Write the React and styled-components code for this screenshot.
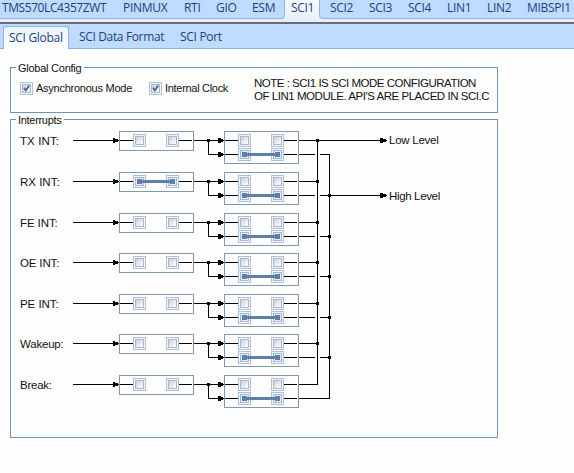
import React from "react";
import styled, { createGlobalStyle } from "styled-components";

const GlobalStyle = createGlobalStyle`
  * { box-sizing: border-box; }
  body { margin: 0; background: #fefeff; overflow: hidden; }
`;

const Page = styled.div`
  width: 574px;
  height: 473px;
  overflow: hidden;
  background: #fefeff;
  color: #111;
  font: 11.5px/14px "Liberation Sans", Arial, sans-serif;
`;

const ModuleBar = styled.nav`
  display: flex;
  height: 22px;
  background: #e5eef9;
`;

const SubBar = styled.nav`
  display: flex;
  align-items: flex-end;
  height: 27px;
  padding-left: 3px;
  border-top: 2px solid #6c6e74;
  border-bottom: 1px solid #8db4e3;
  background: #bfdbff;
`;

const tabText = `
  color: #1e3f80;
  font-family: "Open Sans", "Noto Sans", sans-serif;
  font-size: 12px;
  white-space: nowrap;
`;

const edges = {
  right: "border-right: 1px solid #8db4e3; border-bottom-right-radius: 4px;",
  left: "border-left: 1px solid #8db4e3; border-bottom-left-radius: 4px;",
};

const ModuleTab = styled.div`
  ${tabText}
  flex: none;
  width: ${(p) => p.$width}px;
  height: 19px;
  padding-left: ${(p) => p.$pad ?? 11}px;
  line-height: 16px;
  letter-spacing: ${(p) => p.$spacing}px;
  border-bottom: 1px solid #8db4e3;
  background: #bfdbff;
  ${(p) => edges[p.$edge]}
  ${(p) => p.$active && `height: 22px; border: 0; background: linear-gradient(#f7faff, #e5eef9);`}
`;

const SubTab = styled.div`
  ${tabText}
  flex: none;
  width: ${(p) => p.$width}px;
  height: 23px;
  padding-left: ${(p) => (p.$active ? 5 : 10)}px;
  line-height: ${(p) => (p.$active ? 21 : 24)}px;
  letter-spacing: ${(p) => p.$spacing}px;
  ${(p) =>
    p.$active &&
    `border: 1px solid #8db4e3; border-bottom: 0; border-radius: 3px 3px 0 0;
     background: linear-gradient(#eaf3ff, #fff); margin-bottom: -1px;`}
`;

const Content = styled.main`
  padding: 18px 0 0 10px;
`;

const Group = styled.fieldset`
  display: block;
  min-width: 0;
  width: 488px;
  height: ${(p) => p.$height}px;
  margin: 0 0 ${(p) => p.$gap}px;
  padding: 0;
  border: 1px solid #7391b5;
`;

const GroupHeader = styled.div`
  width: fit-content;
  height: 14px;
  margin: -7px 0 0 5px;
  padding: 0 3px 0 2px;
  background: #fefeff;
  font-size: 11px;
  letter-spacing: ${(p) => p.$spacing}px;
`;

const ConfigRow = styled.div`
  display: flex;
  padding-left: 9px;
`;

const CheckOption = styled.label`
  display: flex;
  flex: none;
  align-items: center;
  width: ${(p) => p.$width}px;
  height: 14px;
  margin-top: 6px;
  gap: 3px;
  font-size: 11px;
  white-space: nowrap;
  letter-spacing: ${(p) => p.$spacing}px;
`;

const Note = styled.p`
  margin: 2px 0 0 -1px;
  line-height: 13px;
  white-space: nowrap;
`;

const NoteLine = styled.span`
  display: block;
  letter-spacing: ${(p) => p.$spacing}px;
`;

const CheckFrame = styled.span`
  display: grid;
  flex: none;
  width: 13px;
  height: 13px;
  padding: 1px;
  border: 1px solid #b0c0db;
  background: #f2f6fb;
`;

const CheckFace = styled.span`
  display: block;
  border: 1px solid ${(p) => (p.$linked ? "#a3b8d8" : "#aab6c9")};
  background: ${(p) =>
    p.$linked ? "#e4ecf6" : "linear-gradient(135deg, #cbd0d8, #f8f8f8 85%)"};
`;

const Diagram = styled.div`
  display: flex;
  padding: 4px 0 0 9px;
`;

const Channels = styled.div`
  width: 279px;
`;

const Channel = styled.div`
  display: flex;
  height: ${(p) => p.$height}px;
`;

const ChannelLabel = styled.span`
  width: 53px;
  padding-top: 3px;
  white-space: nowrap;
  letter-spacing: ${(p) => p.$spacing}px;
`;

const Drawing = styled.svg`
  display: block;
  flex: none;
`;

const SwitchBox = styled.div`
  width: 75px;
  height: ${(p) => p.$height}px;
  padding-top: 2px;
  border: 1px solid #8099b1;
`;

const SwitchLine = styled.div`
  position: relative;
  display: flex;
  align-items: center;
  height: 13px;
  margin-bottom: 1px;
`;

const Lead = styled.span`
  width: 13px;
  height: 1px;
  background: #000;
`;

const Space = styled.span`
  width: 20px;
`;

const Link = styled.svg`
  position: absolute;
  left: 17px;
  top: 4px;
`;

const Outputs = styled.div`
  padding: 2px 0 0 1px;
`;

const OutputLabel = styled.div`
  height: 56px;
  letter-spacing: ${(p) => p.$spacing}px;
`;

const modules = [
  { name: "TMS570LC4357ZWT", width: 112, spacing: -0.42, pad: 2 },
  { name: "PINMUX", width: 61, spacing: -0.3 },
  { name: "RTI", width: 32, spacing: -0.3 },
  { name: "GIO", width: 36, spacing: -0.3 },
  { name: "ESM", width: 44, spacing: -0.3, edge: "right" },
  { name: "SCI1", width: 34, spacing: -0.3, pad: 6, active: true },
  { name: "SCI2", width: 39, spacing: -0.3, pad: 10, edge: "left" },
  { name: "SCI3", width: 39, spacing: -0.3 },
  { name: "SCI4", width: 39, spacing: -0.3 },
  { name: "LIN1", width: 40, spacing: -0.3 },
  { name: "LIN2", width: 40, spacing: -0.3 },
  { name: "MIBSPI1", width: 60, spacing: -0.3 },
];

const channels = [
  { label: "TX INT:", height: 41, spacing: 0.1 },
  { label: "RX INT:", height: 41, spacing: 0 },
  { label: "FE INT:", height: 40, spacing: -0.1 },
  { label: "OE INT:", height: 41, spacing: -0.15 },
  { label: "PE INT:", height: 40, spacing: -0.05 },
  { label: "Wakeup:", height: 41, spacing: -0.2 },
  { label: "Break:", height: 41, spacing: -0.25 },
];

function Check({ checked, linked }) {
  return (
    <CheckFrame>
      <CheckFace $linked={linked}>
        {checked && (
          <Drawing width="7" height="7" viewBox="0 0 7 7">
            <path d="M1 2.8 2.8 5.4 6.2 0.6" fill="none" stroke="#46629a" strokeWidth="1.8" />
          </Drawing>
        )}
      </CheckFace>
    </CheckFrame>
  );
}

function Switch({ linked }) {
  return (
    <SwitchLine>
      <Lead />
      <Check linked={linked} />
      <Space />
      <Check linked={linked} />
      <Lead />
      {linked && (
        <Link width="38" height="5" shapeRendering="crispEdges" fill="#5f7fa6">
          <path d="M0 0h5v1h28v-1h5v5h-5v-1h-28v1h-5z" />
        </Link>
      )}
    </SwitchLine>
  );
}

function InputWire() {
  return (
    <Drawing width="46" height="20" shapeRendering="crispEdges">
      <path d="M0 9h40v-2h2v1h3v1h1v1h-1v1h-3v1h-2v-2h-40z" />
    </Drawing>
  );
}

function SplitWire() {
  return (
    <Drawing width="30" height="33" shapeRendering="crispEdges">
      <path d="M0 9h30v1h-30zM13 8h3v3h-3zM14 10h1v13h15v1h-16z" />
      <path d="M24 7h3v1h2v3h-2v1h-3zM24 21h3v1h2v3h-2v1h-3z" />
    </Drawing>
  );
}

const offsets = [0, 41, 82, 122, 163, 203, 244];

function Bus() {
  return (
    <Drawing width="89" height="270" shapeRendering="crispEdges">
      {offsets.map((y, i) => (
        <g key={y} transform={`translate(0 ${y})`}>
          <rect x="0" y="9" width="18" height="1" />
          <rect x="0" y="23" width={i === 6 ? 31 : 16} height="1" />
          {i < 6 && <rect x="21" y="23" width="10" height="1" />}
          {i < 6 && <rect x="17" y="8" width="3" height="3" />}
          {i > 0 && i < 6 && <rect x="29" y="22" width="3" height="3" />}
        </g>
      ))}
      <path d="M18 9h1v245h-2v-1h1zM30 23h1v245h-1z" />
      <path d="M18 9h63v-2h3v1h3v1h1v1h-1v1h-3v1h-3v-2h-63z" />
      <path d="M30 64h51v-2h3v1h3v1h1v1h-1v1h-3v1h-3v-2h-51z" />
    </Drawing>
  );
}

export default function App() {
  return (
    <Page>
      <GlobalStyle />
      <ModuleBar>
        {modules.map((m) => (
          <ModuleTab
            key={m.name}
            $width={m.width}
            $spacing={m.spacing}
            $pad={m.pad}
            $edge={m.edge}
            $active={m.active}
          >
            {m.name}
          </ModuleTab>
        ))}
      </ModuleBar>
      <SubBar>
        <SubTab $active $width={66} $spacing={-0.3}>SCI Global</SubTab>
        <SubTab $width={101} $spacing={-0.35}>SCI Data Format</SubTab>
        <SubTab $width={60} $spacing={-0.3}>SCI Port</SubTab>
      </SubBar>
      <Content>
        <Group $height={46} $gap={6}>
          <GroupHeader $spacing={-0.25}>Global Config</GroupHeader>
          <ConfigRow>
            <CheckOption $width={129} $spacing={-0.25}><Check checked />Asynchronous Mode</CheckOption>
            <CheckOption $width={106} $spacing={-0.3}><Check checked />Internal Clock</CheckOption>
            <Note>
              <NoteLine $spacing={-0.49}>NOTE : SCI1 IS SCI MODE CONFIGURATION</NoteLine>
              <NoteLine $spacing={-0.46}>OF LIN1 MODULE. API'S ARE PLACED IN SCI.C</NoteLine>
            </Note>
          </ConfigRow>
        </Group>
        <Group $height={319} $gap={0}>
          <GroupHeader $spacing={-0.3}>Interrupts</GroupHeader>
          <Diagram>
            <Channels>
              {channels.map((c) => (
                <Channel key={c.label} $height={c.height}>
                  <ChannelLabel $spacing={c.spacing}>{c.label}</ChannelLabel>
                  <InputWire />
                  <SwitchBox $height={20}>
                    <Switch linked={c.label === "RX INT:"} />
                  </SwitchBox>
                  <SplitWire />
                  <SwitchBox $height={33}>
                    <Switch />
                    <Switch linked />
                  </SwitchBox>
                </Channel>
              ))}
            </Channels>
            <Bus />
            <Outputs>
              <OutputLabel $spacing={-0.25}>Low Level</OutputLabel>
              <OutputLabel $spacing={-0.35}>High Level</OutputLabel>
            </Outputs>
          </Diagram>
        </Group>
      </Content>
    </Page>
  );
}
